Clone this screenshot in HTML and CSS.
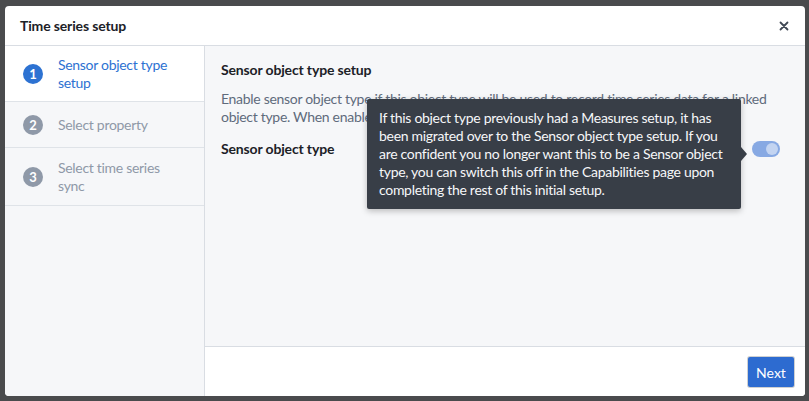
FILE: index.html
```html
<!DOCTYPE html>
<html>
<head>
<meta charset="utf-8">
<link rel="stylesheet" href="styles.css">
</head>
<body>
<div class="dialog">
  <div class="dialog-header">
    <div class="dialog-title">Time series setup</div>
    <svg class="close" width="10" height="10" viewBox="0 0 10 10"><path d="M1.5 1.5 L8.5 8.5 M8.5 1.5 L1.5 8.5" stroke="#404854" stroke-width="1.8" stroke-linecap="round"/></svg>
  </div>
  <div class="dialog-body">
    <div class="sidebar">
      <div class="step step-active step-1">
        <div class="step-num">1</div>
        <div class="step-label">Sensor object type setup</div>
      </div>
      <div class="step step-2">
        <div class="step-num">2</div>
        <div class="step-label">Select property</div>
      </div>
      <div class="step step-3">
        <div class="step-num">3</div>
        <div class="step-label">Select time series sync</div>
      </div>
    </div>
    <div class="main">
      <div class="content">
        <div class="heading">Sensor object type setup</div>
        <div class="desc">Enable sensor object type if this object type will be used to record time series data for a linked object type. When enabled, the property will be used as a series.</div>
        <div class="row">
          <div class="row-label">Sensor object type</div>
          <div class="switch-wrap">
            <div class="switch"><div class="knob"></div></div>
            <div class="tooltip">If this object type previously had a Measures setup, it has been migrated over to the Sensor object type setup. If you are confident you no longer want this to be a Sensor object type, you can switch this off in the Capabilities page upon completing the rest of this initial setup.<span class="arrow"></span></div>
          </div>
        </div>
      </div>
      <div class="footer">
        <button class="btn-next">Next</button>
      </div>
    </div>
  </div>
</div>
</body>
</html>
```

FILE: styles.css
```css
* { box-sizing: border-box; }
html, body { margin: 0; padding: 0; }
body {
  background: #4a4b4d;
  width: 809px;
  height: 401px;
  overflow: hidden;
  font-family: "Lato", "Noto Sans", sans-serif;
  font-size: 14px;
  line-height: 18px;
  letter-spacing: -0.3px;
  color: #1c2127;
}
.dialog {
  margin: 6px 0 0 5px;
  width: 800px;
  height: 390px;
  background: #fff;
  border-radius: 4px;
  display: flex;
  flex-direction: column;
  overflow: hidden;
}
.dialog-header {
  height: 40px;
  flex: none;
  border-bottom: 1px solid #d9dde3;
  display: flex;
  align-items: center;
  padding: 0 16px 0 15px;
}
.dialog-title { font-weight: 700; flex: 1; letter-spacing: -0.15px; }
.close { display: block; }
.dialog-body { flex: 1; display: flex; min-height: 0; }
.sidebar {
  width: 200px;
  flex: none;
  background: #f6f7f9;
  border-right: 1px solid #d9dde3;
}
.step {
  display: flex;
  align-items: center;
  border-bottom: 1px solid #dfe3e8;
  padding: 0 22px 0 18px;
  color: #8f99a8;
}
.step-1 { height: 56px; }
.step-2 { height: 46px; }
.step-3 { height: 58px; }
.step-active { background: #fff; color: #2d72d2; }
.step-num {
  width: 20px;
  height: 20px;
  border-radius: 50%;
  background: #8f99a8;
  color: #fff;
  font-size: 13px;
  font-weight: 700;
  letter-spacing: 0;
  line-height: 20px;
  text-align: center;
  flex: none;
  margin-right: 15px;
}
.step-active .step-num { background: #2d72d2; }
.main {
  flex: 1;
  display: flex;
  flex-direction: column;
  background: #f6f7f9;
  min-width: 0;
}
.content { flex: 1; padding: 15px 16px 0 16px; }
.heading { font-weight: 700; letter-spacing: -0.15px; }
.desc { color: #5f6b7c; margin-top: 11px; }
.row {
  margin-top: 14px;
  display: flex;
  align-items: center;
  justify-content: space-between;
  padding-right: 9px;
}
.row-label { font-weight: 700; letter-spacing: -0.15px; }
.switch-wrap { position: relative; }
.switch {
  width: 28px;
  height: 16px;
  border-radius: 8px;
  background: #87a9e3;
  position: relative;
}
.knob {
  position: absolute;
  right: 2px;
  top: 2px;
  width: 12px;
  height: 12px;
  border-radius: 50%;
  background: #c3d4f1;
}
.tooltip {
  position: absolute;
  right: 39px;
  top: -42px;
  width: 374px;
  padding: 10px 12px;
  background: #383e47;
  color: #f6f7f9;
  border-radius: 2px;
  box-shadow: 0 2px 6px rgba(0,0,0,0.25);
}
.arrow {
  position: absolute;
  right: -6px;
  top: 48px;
  width: 0;
  height: 0;
  border-top: 7px solid transparent;
  border-bottom: 7px solid transparent;
  border-left: 6px solid #383e47;
}
.footer {
  height: 50px;
  flex: none;
  background: #fff;
  border-top: 1px solid #d9dde3;
  display: flex;
  align-items: flex-start;
  justify-content: flex-end;
  padding: 10px 11px 0 0;
}
.btn-next {
  width: 46px;
  height: 30px;
  border: none;
  border-radius: 2px;
  background: #2d6bd0;
  color: #fff;
  font-family: inherit;
  font-size: 14px;
  letter-spacing: 0;
  padding: 0;
  box-shadow: 0 0 0 1px rgba(17,20,24,0.2);
}
```
